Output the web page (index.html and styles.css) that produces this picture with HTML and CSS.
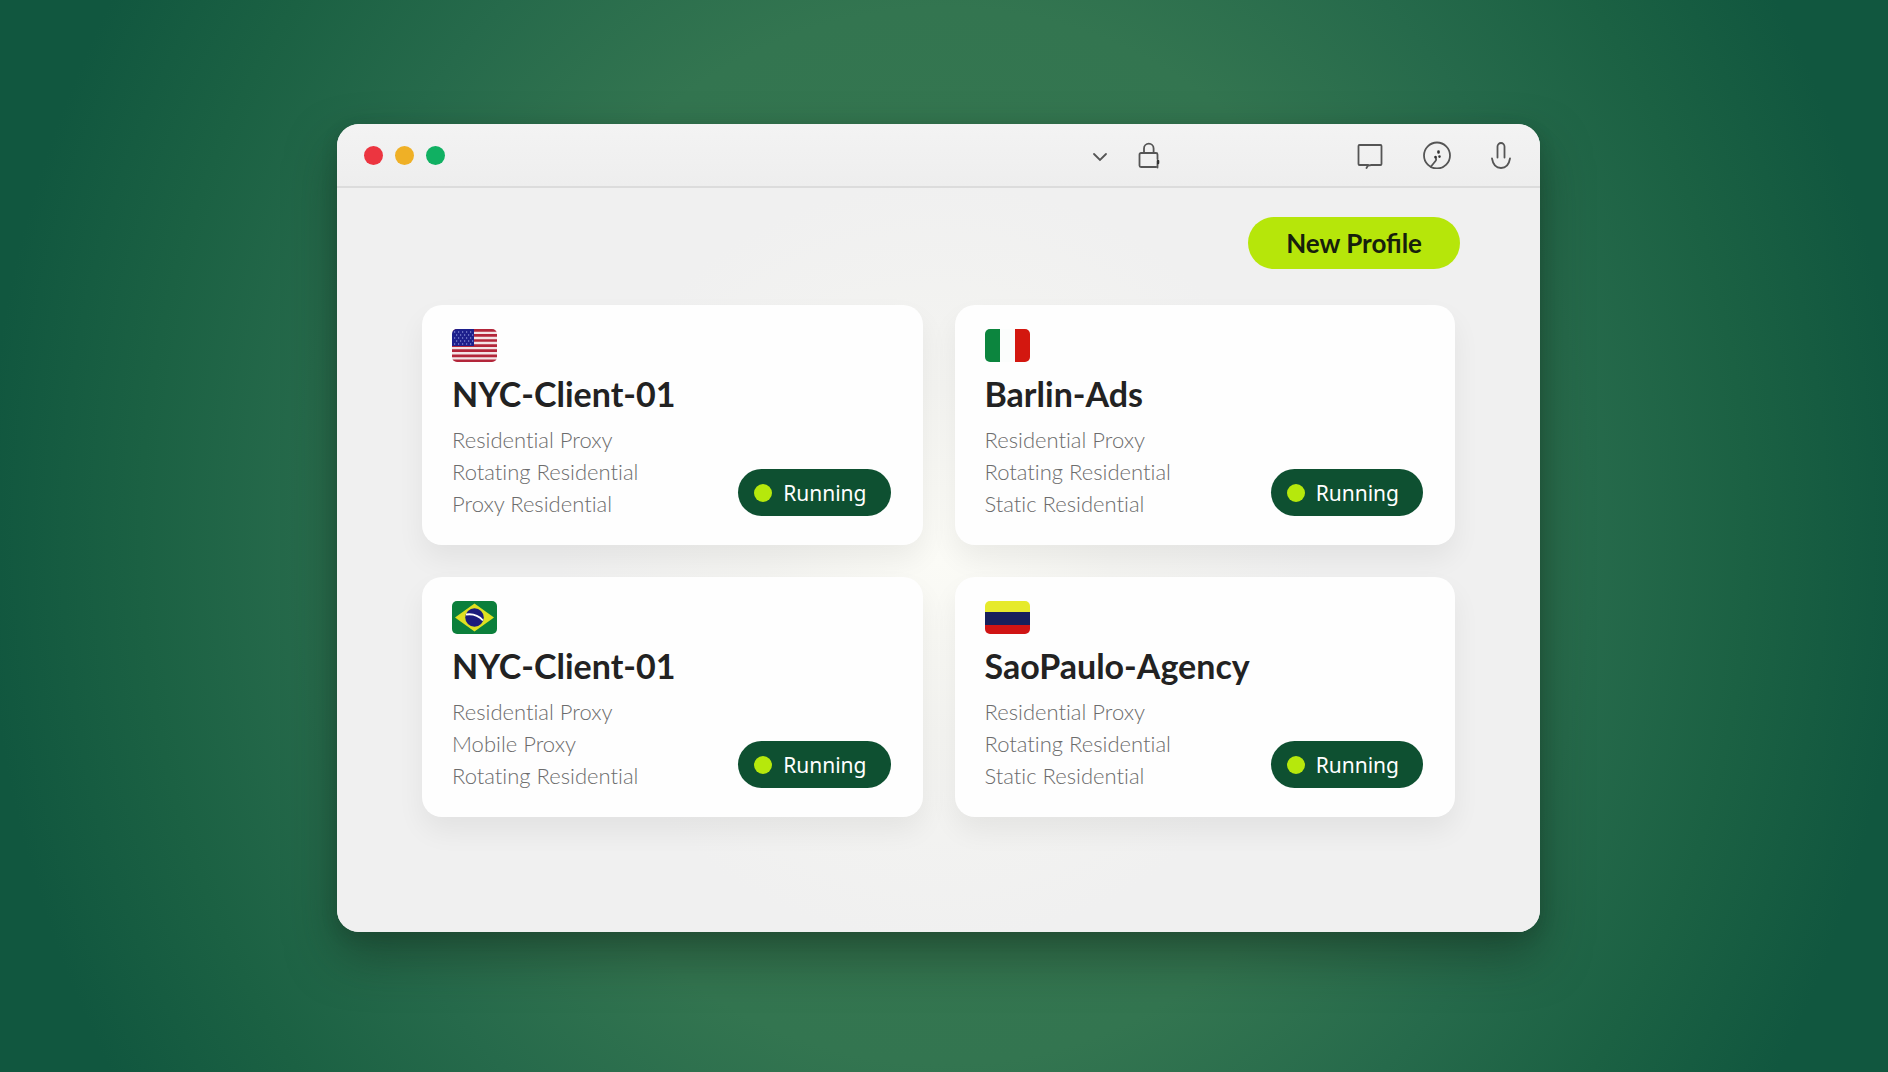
FILE: index.html
```html
<!DOCTYPE html>
<html lang="en">
<head>
    <meta charset="UTF-8">
    <meta name="viewport" content="width=device-width, initial-scale=1.0">
    <title>Profiles</title>
    <link rel="stylesheet" href="styles.css">
</head>
<body>
    <div class="window">
        <header class="titlebar">
            <div class="lights">
                <span class="light red"></span>
                <span class="light yellow"></span>
                <span class="light green"></span>
            </div>
            <div class="address-tools">
                <button class="icon-btn" aria-label="Expand">
                    <svg width="16" height="28" viewBox="0 0 16 28"><path d="M2 13l6 6 6-6"/></svg>
                </button>
                <button class="icon-btn" aria-label="Security">
                    <svg width="22" height="28" viewBox="0 0 22 28"><path d="M6 12V7.500a4.800 4.800 0 0 1 9.600 0V12M19.500 18v-4.500a1.500 1.500 0 0 0-1.500-1.500H3A1.500 1.500 0 0 0 1.500 13.500v11A1.500 1.500 0 0 0 3 26h15M19.500 23v3.500"/><path class="thick" d="M20 20v2"/></svg>
                </button>
            </div>
            <div class="window-tools">
                <button class="icon-btn" aria-label="Chat">
                    <svg width="26" height="28" viewBox="0 0 26 28"><path d="M9.500 27l1.500-2.500 3.500-.5h9a1 1 0 0 0 1-1V5a1 1 0 0 0-1-1h-21a1 1 0 0 0-1 1v18a1 1 0 0 0 1 1H11"/></svg>
                </button>
                <button class="icon-btn" aria-label="Activity">
                    <svg width="28" height="28" viewBox="0 0 28 28"><circle cx="14" cy="14.500" r="13"/><path d="M8 25.500l4.500-5.500c.8-1 .8-2.200.3-3.500"/><path class="thick" d="M15.500 10.500v1M12.500 16v.3M16.500 15.500v.1"/></svg>
                </button>
                <button class="icon-btn" aria-label="Microphone">
                    <svg width="20" height="28" viewBox="0 0 20 28"><path d="M6.500 16.500V5.500a3.500 3.500 0 0 1 7 0v11M1 17.500c1 6 4.500 9.500 9 9.500s8-3.500 9-9.500"/></svg>
                </button>
            </div>
        </header>

        <main class="content">
            <div class="toolbar">
                <button class="new-profile">New Profile</button>
            </div>

            <div class="profiles">
                <article class="card">
                    <svg class="flag" viewBox="0 0 45 33">
                        <rect width="45" height="33" fill="#f3e4e6"/>
                        <path d="M0 1.300h45M0 6.400h45M0 11.500h45M0 16.600h45M0 21.700h45M0 26.800h45M0 31.900h45" stroke="#b3263a" stroke-width="2.700"/>
                        <rect width="22" height="17" fill="#1d1f8c"/>
                        <path d="M2 3h20M4 6h18M2 9h20M4 12h18M2 15h20" stroke="#a9b4ef" stroke-width="1.200" stroke-dasharray="1.200 2.800"/>
                    </svg>
                    <h2 class="name">NYC-Client-01</h2>
                    <div class="details">
                        <ul class="proxies">
                            <li>Residential Proxy</li>
                            <li>Rotating Residential</li>
                            <li>Proxy Residential</li>
                        </ul>
                        <span class="status">Running</span>
                    </div>
                </article>

                <article class="card">
                    <svg class="flag" viewBox="0 0 45 33">
                        <rect width="45" height="33" fill="#fbfdfc"/>
                        <rect width="15" height="33" fill="#0c853e"/>
                        <rect x="30" width="15" height="33" fill="#d3170f"/>
                    </svg>
                    <h2 class="name">Barlin-Ads</h2>
                    <div class="details">
                        <ul class="proxies">
                            <li>Residential Proxy</li>
                            <li>Rotating Residential</li>
                            <li>Static Residential</li>
                        </ul>
                        <span class="status">Running</span>
                    </div>
                </article>

                <article class="card">
                    <svg class="flag" viewBox="0 0 45 33">
                        <rect width="45" height="33" fill="#0b7f3b"/>
                        <path d="M3 16.500L22.500 2.500 42 16.500 22.500 30.500z" fill="#dfe021"/>
                        <circle cx="22.500" cy="16.500" r="9.300" fill="#1b1c7c"/>
                        <path d="M14 13.500c7-1 13 1.500 17 6" fill="none" stroke="#fff" stroke-width="1.800"/>
                    </svg>
                    <h2 class="name">NYC-Client-01</h2>
                    <div class="details">
                        <ul class="proxies">
                            <li>Residential Proxy</li>
                            <li>Mobile Proxy</li>
                            <li>Rotating Residential</li>
                        </ul>
                        <span class="status">Running</span>
                    </div>
                </article>

                <article class="card">
                    <svg class="flag" viewBox="0 0 45 33">
                        <rect width="45" height="11" fill="#e6ea2c"/>
                        <rect y="11" width="45" height="13" fill="#17205c"/>
                        <rect y="24" width="45" height="9" fill="#d01414"/>
                    </svg>
                    <h2 class="name">SaoPaulo-Agency</h2>
                    <div class="details">
                        <ul class="proxies">
                            <li>Residential Proxy</li>
                            <li>Rotating Residential</li>
                            <li>Static Residential</li>
                        </ul>
                        <span class="status">Running</span>
                    </div>
                </article>
            </div>
        </main>
    </div>
</body>
</html>
```
FILE: styles.css
```css
* {
    box-sizing: border-box;
}

body {
    margin: 0;
    padding: 124px 348px 140px 337px;
    min-height: 100vh;
    font-family: Lato, "Open Sans", sans-serif;
    background: radial-gradient(ellipse 980px 1100px at 50% 50%, #38794f 0%, #337550 48%, #266a4b 66%, #1b6143 82%, #11573f 98%);
}

.window {
    border-radius: 22px;
    background: #f0f0f0;
    box-shadow: 0 24px 48px rgba(20, 45, 30, 0.5), 0 4px 16px rgba(20, 45, 30, 0.2);
    overflow: hidden;
}

.titlebar {
    display: flex;
    align-items: center;
    height: 64px;
    padding: 0 29px 0 27px;
    border-bottom: 2px solid #dcdcdc;
    background: linear-gradient(#f3f3f3, #eeeeee);
}

.lights {
    display: flex;
    gap: 12px;
}

.light {
    width: 19px;
    height: 19px;
    border-radius: 50%;
}

.red {
    background: #ec3540;
}

.yellow {
    background: #efb026;
}

.green {
    background: #10b062;
}

.address-tools {
    display: flex;
    align-items: center;
    gap: 30px;
    margin-left: auto;
}

.window-tools {
    display: flex;
    align-items: center;
    gap: 40px;
    margin-left: 197px;
}

.icon-btn {
    display: flex;
    padding: 0;
    border: none;
    background: none;
    cursor: pointer;
}

.icon-btn svg {
    fill: none;
    stroke: #555;
    stroke-width: 1.8;
    stroke-linecap: round;
}

.icon-btn .thick {
    stroke: #333;
    stroke-width: 2.6;
}

.content {
    padding: 29px 80px 115px;
    background: radial-gradient(circle 380px at 50% 374px, #fbfbf6 0%, #f4f4f1 45%, #f0f0f0 100%);
}

.toolbar {
    display: flex;
    justify-content: flex-end;
    margin-bottom: 36px;
}

.new-profile {
    height: 52px;
    padding: 0 38px;
    border: none;
    border-radius: 26px;
    background: #b6e60a;
    color: #16200c;
    font: 700 26px/52px Lato, "Open Sans", sans-serif;
    cursor: pointer;
}

.profiles {
    display: grid;
    grid-template-columns: 1fr 1fr;
    gap: 32px;
    padding: 0 5px;
}

.card {
    padding: 24px 32px 25px 30px;
    border-radius: 20px;
    background: #fefefe;
    box-shadow: 0 14px 28px rgba(0, 0, 0, 0.06);
}

.flag {
    display: block;
    width: 45px;
    height: 33px;
    border-radius: 5px;
}

.name {
    margin: 10px 0 8px;
    color: #222;
    font-size: 34px;
    font-weight: 700;
    line-height: 44px;
}

.details {
    display: flex;
    justify-content: space-between;
    align-items: flex-end;
}

.proxies {
    margin: 0;
    padding: 0;
    list-style: none;
    color: #6c6c6c;
    font-size: 22px;
    font-weight: 300;
    font-variant-ligatures: none;
    line-height: 32px;
}

.status {
    display: flex;
    align-items: center;
    gap: 11px;
    height: 47px;
    margin-bottom: 4px;
    padding: 0 24px 0 16px;
    border-radius: 24px;
    background: #0e5031;
    color: #fff;
    font-family: "Noto Sans", "Open Sans", sans-serif;
    font-size: 21px;
}

.status::before {
    content: "";
    width: 18px;
    height: 18px;
    border-radius: 50%;
    background: #b6e80c;
}
```
